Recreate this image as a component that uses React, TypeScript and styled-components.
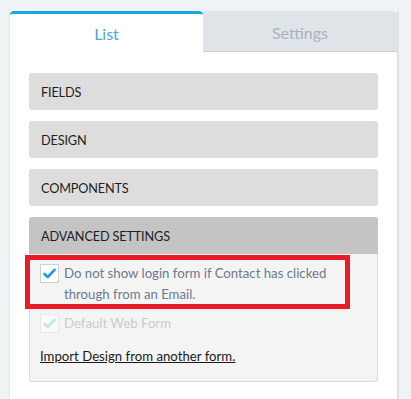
import React from "react";
import styled, { createGlobalStyle } from "styled-components";

const Global = createGlobalStyle`
  html, body { margin: 0; padding: 0; }
  body {
    background: #eff3f6;
    font-family: "Source Sans Pro", Lato, "Open Sans", sans-serif;
    overflow: hidden;
  }
`;

const Page = styled.div`
  padding: 11px 12px 0 9px;
  height: 399px;
  box-sizing: border-box;
`;

const Card = styled.div`
  background: #fff;
  border-left: 1px solid #e4e8ec;
  border-right: 2px solid #dde3e8;
  height: 400px;
  box-sizing: border-box;
`;

const Tabs = styled.div`
  display: grid;
  grid-template-columns: 193px 1fr;
  height: 41px;
`;

const Tab = styled.div<{ $active?: boolean }>`
  display: flex;
  align-items: center;
  justify-content: center;
  font-size: 16px;
  box-sizing: border-box;
  color: ${(p) => (p.$active ? "#4aa7e6" : "#aab3bd")};
  background: ${(p) => (p.$active ? "#fff" : "#dfe4e8")};
  border-top: ${(p) => (p.$active ? "3px solid #17a9e4" : "none")};
  border-bottom: ${(p) => (p.$active ? "none" : "1px solid #c8ced4")};
  border-radius: ${(p) => (p.$active ? "4px 4px 0 0" : "0 4px 0 0")};
  padding-top: ${(p) => (p.$active ? "0" : "2px")};
`;

const Body = styled.div`
  padding: 21px 19px 0 19px;
  display: flex;
  flex-direction: column;
  gap: 11px;
`;

const Panel = styled.div`
  border-radius: 3px;
`;

const PanelHead = styled.div<{ $open?: boolean }>`
  height: 37px;
  display: flex;
  align-items: center;
  padding-left: 12px;
  padding-top: 1px;
  box-sizing: border-box;
  font-size: 12.7px;
  letter-spacing: -0.15px;
  color: #1e1e1e;
  background: ${(p) => (p.$open ? "#c4c4c4" : "#dddddd")};
  border-radius: ${(p) => (p.$open ? "3px 3px 0 0" : "3px")};
`;

const PanelBody = styled.div`
  background: #f4f4f4;
  border: 1px solid #dadada;
  border-top: none;
  border-radius: 0 0 3px 3px;
  padding: 9px 11px 0 10px;
  height: 128px;
  box-sizing: border-box;
  display: flex;
  flex-direction: column;
`;

const Option = styled.label<{ $disabled?: boolean }>`
  position: relative;
  display: flex;
  gap: 5px;
  font-size: 13.2px;
  line-height: 21px;
  color: ${(p) => (p.$disabled ? "#cbcbcb" : "#6c7a90")};
  margin-bottom: ${(p) => (p.$disabled ? "11px" : "8px")};
`;

const Highlight = styled.span`
  position: absolute;
  left: -15px;
  top: -8px;
  width: 325px;
  height: 54px;
  border: 5px solid #e81c26;
  box-sizing: border-box;
  pointer-events: none;
`;

const Box = styled.span<{ $disabled?: boolean }>`
  flex: none;
  width: 19px;
  height: 19px;
  margin-top: 1px;
  box-sizing: border-box;
  background: #fff;
  border: 1px solid ${(p) => (p.$disabled ? "#e2e2e2" : "#cfcfcf")};
  display: flex;
  align-items: center;
  justify-content: center;
  opacity: ${(p) => (p.$disabled ? 0.6 : 1)};
`;

const Link = styled.a`
  font-size: 13.2px;
  color: #1a1a1a;
  text-decoration: underline;
  line-height: 18px;
`;

const Check = ({ disabled }: { disabled?: boolean }) => (
  <Box $disabled={disabled}>
    <svg width="13" height="11" viewBox="0 0 13 11">
      <path
        d="M1.5 6 L4.8 9 L11.5 1.8"
        fill="none"
        stroke={disabled ? "#a9d8f2" : "#1c9ce8"}
        strokeWidth="2.6"
        strokeLinecap="round"
        strokeLinejoin="round"
      />
    </svg>
  </Box>
);

export default function App() {
  return (
    <>
      <Global />
      <Page>
        <Card>
          <Tabs>
            <Tab $active>List</Tab>
            <Tab>Settings</Tab>
          </Tabs>
          <Body>
            <Panel>
              <PanelHead>FIELDS</PanelHead>
            </Panel>
            <Panel>
              <PanelHead>DESIGN</PanelHead>
            </Panel>
            <Panel>
              <PanelHead>COMPONENTS</PanelHead>
            </Panel>
            <Panel>
              <PanelHead $open>ADVANCED SETTINGS</PanelHead>
              <PanelBody>
                <Option>
                  <Highlight />
                  <Check />
                  <span>
                    Do not show login form if Contact has clicked
                    <br />
                    through from an Email.
                  </span>
                </Option>
                <Option $disabled>
                  <Check disabled />
                  <span>Default Web Form</span>
                </Option>
                <div>
                  <Link href="#">Import Design from another form.</Link>
                </div>
              </PanelBody>
            </Panel>
          </Body>
        </Card>
      </Page>
    </>
  );
}
